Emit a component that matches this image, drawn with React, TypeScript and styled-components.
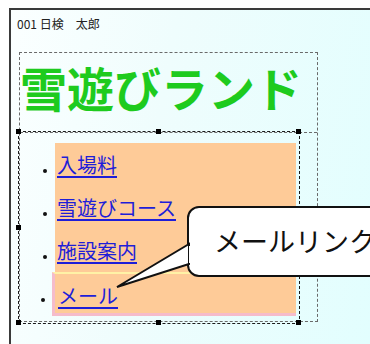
import * as React from "react";
import styled, { createGlobalStyle } from "styled-components";

const GlobalStyle = createGlobalStyle`
  html, body {
    margin: 0;
    padding: 0;
    background: #ffffff;
    overflow: hidden;
  }
  body {
    font-family: "Noto Sans CJK JP", "Noto Sans", sans-serif;
  }
`;

const items = ["入場料", "雪遊びコース", "施設案内", "メール"];

const Page = styled.div`
  width: 370px;
  height: 344px;
  padding: 8px 0 0 9px;
  box-sizing: border-box;
  overflow: hidden;
  position: relative;
`;

const Window = styled.div`
  height: 336px;
  border-top: 2px solid #3a3a3a;
  border-left: 2px solid #3a3a3a;
  background: linear-gradient(100deg, #fbffff 0%, #effdfd 40%, #e2fefe 100%);
  padding: 6px 0 0 6px;
  box-sizing: border-box;
`;

const Caption = styled.div`
  font-size: 12px;
  line-height: 16px;
  color: #222;
  white-space: pre;
`;

const Canvas = styled.div`
  margin: 20px 0 0 2px;
  width: 299px;
  height: 270px;
  border: 1px dashed #6a6a6a;
  box-sizing: border-box;
`;

const Heading = styled.h1`
  margin: 0;
  height: 80px;
  padding-top: 10px;
  box-sizing: border-box;
  border-bottom: 1px dashed #6a6a6a;
  font-size: 47px;
  line-height: 47px;
  font-weight: 700;
  color: #1ecb1e;
  white-space: nowrap;
`;

const Selection = styled.div`
  position: relative;
  margin: -2px 0 0 -2px;
  width: 282px;
  height: 193px;
  border: 1px dashed #1a1a1a;
  box-sizing: border-box;
  padding: 11px 0 0 36px;
`;

const Handle = styled.span<{ $x: string; $y: string }>`
  position: absolute;
  width: 5px;
  height: 5px;
  background: #000;
  left: calc(${(p) => p.$x} - 3px);
  top: calc(${(p) => p.$y} - 3px);
`;

const List = styled.ul`
  margin: 0;
  padding: 0;
  list-style: none;
  width: 241px;
  background: #fecb98;
`;

const Item = styled.li<{ $active?: boolean }>`
  position: relative;
  height: ${(p) => (p.$active ? "44px" : "43px")};
  line-height: 43px;
  font-size: 20px;
  box-sizing: border-box;
  padding-left: ${(p) => (p.$active ? "3px" : "2px")};
  margin-left: ${(p) => (p.$active ? "-3px" : "0")};
  border-top: ${(p) => (p.$active ? "2px solid #fff2a6" : "none")};
  border-left: ${(p) => (p.$active ? "3px solid #f5bccb" : "none")};
  border-bottom: ${(p) => (p.$active ? "3px solid #f5bccb" : "none")};
  background: #fecb98;

  &::before {
    content: "";
    position: absolute;
    left: ${(p) => (p.$active ? "-14px" : "-12px")};
    top: ${(p) => (p.$active ? "24px" : "26px")};
    width: 4px;
    height: 4px;
    border-radius: 50%;
    background: #111;
  }
`;

const Link = styled.a`
  color: #1e1ed8;
  text-decoration: underline;
  text-underline-offset: 3px;
`;

const Callout = styled.div`
  position: absolute;
  left: 187px;
  top: 206px;
  width: 260px;
  height: 71px;
  border: 2px solid #111;
  border-radius: 12px;
  background: #fff;
  box-sizing: border-box;
  padding-left: 25px;
  font-size: 27px;
  line-height: 66px;
  color: #111;
  white-space: nowrap;
`;

const Tail = styled.svg`
  position: absolute;
  left: 110px;
  top: 238px;
`;

const handles: [string, string][] = [
  ["0%", "0%"],
  ["50%", "0%"],
  ["100%", "0%"],
  ["0%", "50%"],
  ["0%", "100%"],
  ["50%", "100%"],
  ["100%", "100%"],
];

export default function App() {
  return (
    <>
      <GlobalStyle />
      <Page>
        <Window>
          <Caption>001 日検　太郎</Caption>
          <Canvas>
            <Heading>雪遊びランド</Heading>
            <Selection>
              {handles.map(([x, y], i) => (
                <Handle key={i} $x={x} $y={y} />
              ))}
              <List>
                {items.map((t, i) => (
                  <Item key={t} $active={i === items.length - 1}>
                    <Link href="#">{t}</Link>
                  </Item>
                ))}
              </List>
            </Selection>
          </Canvas>
        </Window>
        <Callout>メールリンク</Callout>
        <Tail width="90" height="56" viewBox="0 0 90 56">
          <polygon points="79,6 7,49 79,26" fill="#fff" stroke="#111" strokeWidth="2" strokeLinejoin="miter" />
          <rect x="79" y="8" width="2" height="17" fill="#fff" />
        </Tail>
      </Page>
    </>
  );
}
